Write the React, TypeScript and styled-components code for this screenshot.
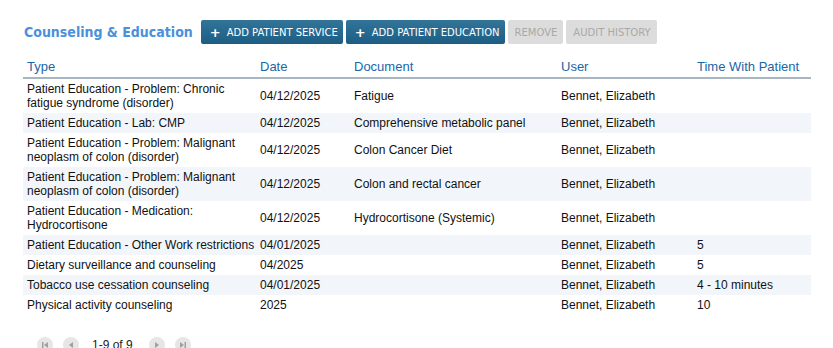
import React from "react";
import styled, { createGlobalStyle } from "styled-components";

const Global = createGlobalStyle`
  html, body { margin: 0; padding: 0; background: #fff; overflow: hidden; }
  body { font-family: "Liberation Sans", Arial, sans-serif; }
`;

const Page = styled.div`
  padding: 20px 22px 0 23px;
  width: 788px;
`;

const Toolbar = styled.div`
  display: flex;
  align-items: center;
  height: 24px;
  gap: 3px;
`;

const Title = styled.h2`
  margin: 0 5px 0 1px;
  font-family: "DejaVu Sans Condensed", "DejaVu Sans", Tahoma, sans-serif;
  font-stretch: condensed;
  font-weight: bold;
  font-size: 14px;
  color: #4b90da;
`;

const Button = styled.button<{ $disabled?: boolean }>`
  height: 24px;
  border: none;
  border-radius: 2px;
  padding: ${(p) => (p.$disabled ? "0 6px 0 7px" : "0 5px 0 9px")};
  display: flex;
  align-items: center;
  gap: 6px;
  font-family: "DejaVu Sans", Tahoma, sans-serif;
  font-size: 10px;
  text-transform: uppercase;
  color: ${(p) => (p.$disabled ? "#a9a9a9" : "#ffffff")};
  background: ${(p) =>
    p.$disabled ? "#dcdcdc" : "linear-gradient(#327599, #1d5d84)"};
  cursor: default;
`;

const Plus = styled.span`
  font-weight: bold;
  font-size: 13px;
  line-height: 1;
`;

const Table = styled.table`
  margin-top: 13px;
  width: 788px;
  border-collapse: collapse;
  table-layout: fixed;
  font-size: 12px;
`;

const Th = styled.th<{ $w: number }>`
  width: ${(p) => p.$w}px;
  text-align: left;
  font-weight: normal;
  font-size: 13px;
  color: #1a66a6;
  padding: 2px 4px 3px 4px;
  border-bottom: 2px solid #a8b6c4;
  height: 15px;
`;

const Tr = styled.tr<{ $alt: boolean }>`
  background: ${(p) => (p.$alt ? "#f2f6fb" : "#ffffff")};
`;

const Td = styled.td`
  padding: 3px 4px;
  line-height: 14px;
  color: #111;
  vertical-align: middle;
  &:first-child {
    padding-right: 0;
  }
`;

const Pager = styled.div`
  display: flex;
  align-items: center;
  margin: 22px 0 0 14px;
`;

const PageBtn = styled.span`
  width: 16px;
  height: 16px;
  border-radius: 50%;
  background: #e6e6e6;
  display: inline-flex;
  align-items: center;
  justify-content: center;
  margin-right: 10px;
`;

const PageText = styled.span`
  font-size: 12px;
  color: #222;
  margin: 0 16px 0 3px;
`;

const rows = [
  ["Patient Education - Problem: Chronic fatigue syndrome (disorder)", "04/12/2025", "Fatigue", "Bennet, Elizabeth", ""],
  ["Patient Education - Lab: CMP", "04/12/2025", "Comprehensive metabolic panel", "Bennet, Elizabeth", ""],
  ["Patient Education - Problem: Malignant neoplasm of colon (disorder)", "04/12/2025", "Colon Cancer Diet", "Bennet, Elizabeth", ""],
  ["Patient Education - Problem: Malignant neoplasm of colon (disorder)", "04/12/2025", "Colon and rectal cancer", "Bennet, Elizabeth", ""],
  ["Patient Education - Medication: Hydrocortisone", "04/12/2025", "Hydrocortisone (Systemic)", "Bennet, Elizabeth", ""],
  ["Patient Education - Other Work restrictions", "04/01/2025", "", "Bennet, Elizabeth", "5"],
  ["Dietary surveillance and counseling", "04/2025", "", "Bennet, Elizabeth", "5"],
  ["Tobacco use cessation counseling", "04/01/2025", "", "Bennet, Elizabeth", "4 - 10 minutes"],
  ["Physical activity counseling", "2025", "", "Bennet, Elizabeth", "10"],
];

const Icon = ({ kind }: { kind: "first" | "prev" | "next" | "last" }) => {
  const c = "#a0a0a0";
  return (
    <svg width="10" height="10" viewBox="0 0 10 10">
      {kind === "first" && (
        <>
          <rect x="2" y="2" width="1.5" height="6" fill={c} />
          <polygon points="8,2 8,8 4,5" fill={c} />
        </>
      )}
      {kind === "prev" && <polygon points="7,2 7,8 3,5" fill={c} />}
      {kind === "next" && <polygon points="3,2 3,8 7,5" fill={c} />}
      {kind === "last" && (
        <>
          <polygon points="2,2 2,8 6,5" fill={c} />
          <rect x="6.5" y="2" width="1.5" height="6" fill={c} />
        </>
      )}
    </svg>
  );
};

export default function App() {
  return (
    <>
      <Global />
      <Page>
        <Toolbar>
          <Title>Counseling &amp; Education</Title>
          <Button>
            <Plus>+</Plus>Add Patient Service
          </Button>
          <Button>
            <Plus>+</Plus>Add Patient Education
          </Button>
          <Button $disabled>Remove</Button>
          <Button $disabled>Audit History</Button>
        </Toolbar>
        <Table>
          <thead>
            <tr>
              <Th $w={225}>Type</Th>
              <Th $w={86}>Date</Th>
              <Th $w={199}>Document</Th>
              <Th $w={128}>User</Th>
              <Th $w={110}>Time With Patient</Th>
            </tr>
          </thead>
          <tbody>
            {rows.map((r, i) => (
              <Tr key={i} $alt={i % 2 === 1}>
                {r.map((c, j) => (
                  <Td key={j}>{c}</Td>
                ))}
              </Tr>
            ))}
          </tbody>
        </Table>
        <Pager>
          <PageBtn><Icon kind="first" /></PageBtn>
          <PageBtn><Icon kind="prev" /></PageBtn>
          <PageText>1-9 of 9</PageText>
          <PageBtn><Icon kind="next" /></PageBtn>
          <PageBtn><Icon kind="last" /></PageBtn>
        </Pager>
      </Page>
    </>
  );
}
